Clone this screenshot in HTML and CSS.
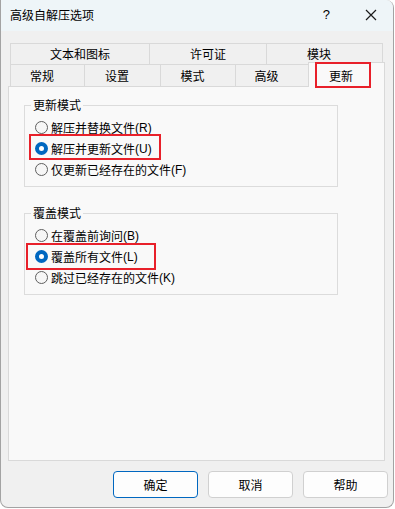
FILE: index.html
```html
<!DOCTYPE html>
<html lang="zh-CN">
<head>
    <meta charset="UTF-8">
    <title>高级自解压选项</title>
    <link rel="stylesheet" href="styles.css">
</head>
<body>
    <div class="window">
        <!-- Title bar -->
        <div class="titlebar">
            <span class="title">高级自解压选项</span>
            <div class="title-buttons">
                <span class="help-btn">?</span>
                <svg class="close-btn" width="12" height="12" viewBox="0 0 12 12">
                    <path d="M1 1 L11 11 M11 1 L1 11" stroke="#1a1a1a" stroke-width="1.2" fill="none"/>
                </svg>
            </div>
        </div>

        <div class="content">
            <!-- Tabs -->
            <div class="tab-row">
                <div class="tab w140">文本和图标</div>
                <div class="tab w118">许可证</div>
                <div class="tab w117 shift">模块</div>
            </div>
            <div class="tab-row lower">
                <div class="tab shift w75">常规</div>
                <div class="tab shift w77">设置</div>
                <div class="tab shift w76">模式</div>
                <div class="tab shift w74">高级</div>
                <div class="tab shift active">
                    更新
                    <span class="mark mark-tab"></span>
                </div>
            </div>

            <!-- Panel -->
            <div class="panel">
                <fieldset class="group">
                    <legend>更新模式</legend>
                    <div class="radio-row"><span class="radio"></span>解压并替换文件<span class="key">(R)</span></div>
                    <div class="radio-row"><span class="radio checked"></span>解压并更新文件<span class="key">(U)</span>
                        <span class="mark mark-1"></span>
                    </div>
                    <div class="radio-row"><span class="radio"></span>仅更新已经存在的文件<span class="key">(F)</span></div>
                </fieldset>

                <fieldset class="group second">
                    <legend>覆盖模式</legend>
                    <div class="radio-row"><span class="radio"></span>在覆盖前询问<span class="key">(B)</span></div>
                    <div class="radio-row"><span class="radio checked"></span>覆盖所有文件<span class="key">(L)</span>
                        <span class="mark mark-2"></span>
                    </div>
                    <div class="radio-row"><span class="radio"></span>跳过已经存在的文件<span class="key">(K)</span></div>
                </fieldset>
            </div>

            <!-- Dialog buttons -->
            <div class="dialog-buttons">
                <button class="default">确定</button>
                <button>取消</button>
                <button>帮助</button>
            </div>
        </div>
    </div>
</body>
</html>
```

FILE: styles.css
```css
html, body {
    margin: 0;
    padding: 0;
    background: #ffffff;
    font-family: "Noto Sans CJK SC", "Liberation Sans", sans-serif;
    font-size: 12px;
    color: #000;
}
.window {
    width: 394px;
    height: 508px;
    box-sizing: border-box;
    border: 1px solid #a3a3a3;
    border-top: none;
    border-radius: 0 8px 8px 8px;
    background: #f0f0f0;
    overflow: hidden;
}
.titlebar {
    height: 31px;
    background: #eef5f8;
    display: flex;
    align-items: center;
    justify-content: space-between;
    padding-left: 9px;
}
.title {
    font-size: 12px;
    line-height: 16px;
    margin-top: -2px;
}
.title-buttons {
    display: flex;
    align-items: center;
}
.help-btn {
    font-family: "Liberation Sans", sans-serif;
    font-size: 13px;
    margin-right: 35px;
    margin-top: -2px;
}
.close-btn {
    margin-right: 16px;
    margin-top: -2px;
}
.content {
    padding: 12px 8px 0 7px;
}

/* Tabs */
.tab-row {
    display: flex;
    margin-left: 2px;
}
.tab {
    box-sizing: border-box;
    height: 21px;
    border: 1px solid #d9d9d9;
    border-bottom: none;
    margin-left: -1px;
    background: #f0f0f0;
    display: flex;
    align-items: center;
    justify-content: center;
    line-height: 16px;
}
.tab:first-child {
    margin-left: 0;
}
.tab-row.lower {
    height: 22px;
    align-items: flex-end;
}
.tab-row.lower .tab {
    height: 22px;
}
.shift {
    padding-right: 11px;
}
.w140 { width: 140px; }
.w118 { width: 118px; }
.w117 { width: 117px; }
.w75 { width: 75px; }
.w77 { width: 77px; }
.w76 { width: 76px; }
.w74 { width: 74px; }
.tab-row.lower .tab.active {
    position: relative;
    z-index: 1;
    width: 77px;
    height: 25px;
    margin-left: -1px;
    margin-bottom: -1px;
    background: #f9f9f9;
    padding-top: 1px;
}

/* red annotation boxes */
.mark {
    position: absolute;
    border: 2px solid #e8202a;
    pointer-events: none;
}
.mark-tab {
    left: 6px;
    top: -1px;
    width: 52px;
    height: 22px;
}
.mark-1 {
    left: -6px;
    top: -4px;
    width: 128px;
    height: 22px;
}
.mark-2 {
    left: -9px;
    top: -3px;
    width: 126px;
    height: 23px;
}

/* Panel */
.panel {
    box-sizing: border-box;
    width: 377px;
    height: 375px;
    border: 1px solid #d9d9d9;
    background: #f9f9f9;
    padding-top: 10px;
}
.group {
    margin: 0 0 0 15px;
    width: 314px;
    box-sizing: border-box;
    border: 1px solid #dcdcdc;
    padding: 4px 0 6px 10px;
}
.group.second {
    margin-top: 18px;
}
.group legend {
    padding: 0 2px;
    margin-left: -4px;
    line-height: 16px;
}
.radio-row {
    position: relative;
    height: 21px;
    display: flex;
    align-items: center;
    line-height: 16px;
}
.key {
    font-family: "Liberation Sans", sans-serif;
    font-size: 12px;
}
.radio {
    box-sizing: border-box;
    width: 13px;
    height: 13px;
    border-radius: 50%;
    border: 1px solid #5f5f5f;
    background: #f6f6f6;
    margin-right: 3px;
    flex-shrink: 0;
}
.radio.checked {
    border: 4px solid #0067c0;
    background: #ffffff;
}

/* Buttons */
.dialog-buttons {
    display: flex;
    justify-content: flex-end;
    gap: 10px;
    margin-top: 10px;
    padding-right: 0;
    margin-right: -3px;
}
button {
    width: 85px;
    height: 27px;
    box-sizing: border-box;
    background: #fdfdfd;
    border: 1px solid #d0d0d0;
    border-radius: 4px;
    font-family: "Noto Sans CJK SC", sans-serif;
    font-size: 12px;
    color: #000;
    padding: 0;
}
button.default {
    border-color: #0067c0;
}
```
